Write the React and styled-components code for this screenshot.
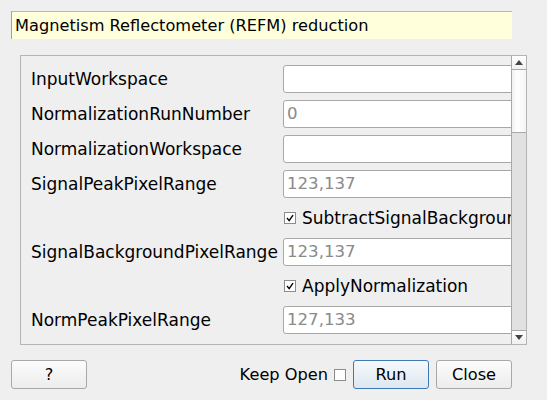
import React from 'react';
import styled, { createGlobalStyle } from 'styled-components';

const GlobalStyle = createGlobalStyle`
    body {
        margin: 0;
        background: #efefef;
        font-family: "DejaVu Sans", "Liberation Sans", sans-serif;
    }
`;

const Dialog = styled.div`
    width: 547px;
    height: 400px;
    display: flex;
    flex-direction: column;
    box-sizing: border-box;
    padding-top: 11px;
`;

const TitleBox = styled.div`
    margin: 0 35px 0 11px;
    height: 28px;
    box-sizing: border-box;
    background: #ffffdc;
    border-top: 1px solid #b8b8b0;
    border-left: 1px solid #a0a0a0;
    padding-left: 3px;
    font-size: 16.2px;
    line-height: 27px;
    color: #000;
`;

const ScrollFrame = styled.div`
    margin: 16px 20px 0 20px;
    height: 290px;
    box-sizing: border-box;
    border: 1px solid #b4b4b4;
    display: flex;
`;

const Viewport = styled.div`
    flex: 1;
    overflow: hidden;
`;

const Content = styled.div`
    display: grid;
    grid-template-columns: 252px 300px;
    row-gap: 7px;
    align-items: center;
    padding: 9px 0 0 10px;
`;

const Label = styled.div`
    font-size: 17px;
    color: #000;
    white-space: nowrap;
`;

const TextInput = styled.div`
    height: 28px;
    box-sizing: border-box;
    border: 1px solid #a8a8a8;
    border-radius: 3px;
    background: #fff;
    padding-left: 3px;
    font-size: 16.6px;
    line-height: 26px;
    color: #8a8a8a;
`;

const CheckRow = styled.div`
    grid-column: 2;
    height: 26px;
    display: flex;
    align-items: center;
    gap: 6px;
    font-size: 17px;
    white-space: nowrap;
    padding-left: 1px;
`;

const Box = styled.span`
    width: 12px;
    height: 12px;
    box-sizing: border-box;
    border: 1px solid #8c8c8c;
    background: #fff;
    display: inline-flex;
    align-items: center;
    justify-content: center;
    flex: none;
`;

const ScrollBar = styled.div`
    width: 14px;
    border-left: 1px solid #a8a8a8;
    display: flex;
    flex-direction: column;
    background: #e1e1e1;
`;

const ArrowButton = styled.div`
    height: 13px;
    display: flex;
    align-items: center;
    justify-content: center;
    background: linear-gradient(#ffffff, #f0f0f0);
    border-top: ${p => (p.$down ? '1px solid #a8a8a8' : 'none')};
    border-bottom: ${p => (p.$down ? 'none' : '1px solid #a8a8a8')};
`;

const Handle = styled.div`
    height: 62px;
    background: linear-gradient(90deg, #f2f2f2, #ffffff 40%, #f4f4f4);
    border-bottom: 1px solid #a8a8a8;
`;

const Track = styled.div`
    flex: 1;
`;

const Footer = styled.div`
    display: flex;
    align-items: center;
    margin-top: 15px;
    padding: 0 35px 0 11px;
`;

const Button = styled.div`
    width: 76px;
    height: 29px;
    box-sizing: border-box;
    border: 1px solid ${p => (p.$primary ? '#3d7ab5' : '#a8a8a8')};
    border-radius: 3px;
    background: ${p => (p.$primary
        ? 'linear-gradient(#f6f9fc, #dde7f0)'
        : 'linear-gradient(#fcfcfc, #ececec)')};
    display: flex;
    align-items: center;
    justify-content: center;
    font-size: 16.2px;
    color: #000;
    margin-left: ${p => p.$gap || 0}px;
`;

const Spacer = styled.div`
    flex: 1;
`;

const KeepOpen = styled.div`
    display: flex;
    align-items: center;
    gap: 6px;
    font-size: 16.2px;
`;

const Tick = () => (
    <svg width="10" height="10" viewBox="0 0 10 10">
        <path d="M2 5 L4.2 7.6 L8 2.2" fill="none" stroke="#000" strokeWidth="1.4" />
    </svg>
);

const Arrow = ({ down }) => (
    <svg width="8" height="5" viewBox="0 0 8 5">
        <path d={down ? 'M0 0 L8 0 L4 5 Z' : 'M0 5 L8 5 L4 0 Z'} fill="#444" />
    </svg>
);

const App = () => (
    <Dialog>
        <GlobalStyle />
        <TitleBox>Magnetism Reflectometer (REFM) reduction</TitleBox>
        <ScrollFrame>
            <Viewport>
                <Content>
                    <Label>InputWorkspace</Label>
                    <TextInput />
                    <Label>NormalizationRunNumber</Label>
                    <TextInput>0</TextInput>
                    <Label>NormalizationWorkspace</Label>
                    <TextInput />
                    <Label>SignalPeakPixelRange</Label>
                    <TextInput>123,137</TextInput>
                    <CheckRow><Box><Tick /></Box>SubtractSignalBackground</CheckRow>
                    <Label>SignalBackgroundPixelRange</Label>
                    <TextInput>123,137</TextInput>
                    <CheckRow><Box><Tick /></Box>ApplyNormalization</CheckRow>
                    <Label>NormPeakPixelRange</Label>
                    <TextInput>127,133</TextInput>
                </Content>
            </Viewport>
            <ScrollBar>
                <ArrowButton><Arrow /></ArrowButton>
                <Handle />
                <Track />
                <ArrowButton $down><Arrow down /></ArrowButton>
            </ScrollBar>
        </ScrollFrame>
        <Footer>
            <Button>?</Button>
            <Spacer />
            <KeepOpen>Keep Open<Box /></KeepOpen>
            <Button $primary $gap={7}>Run</Button>
            <Button $gap={7}>Close</Button>
        </Footer>
    </Dialog>
);

export default App;
